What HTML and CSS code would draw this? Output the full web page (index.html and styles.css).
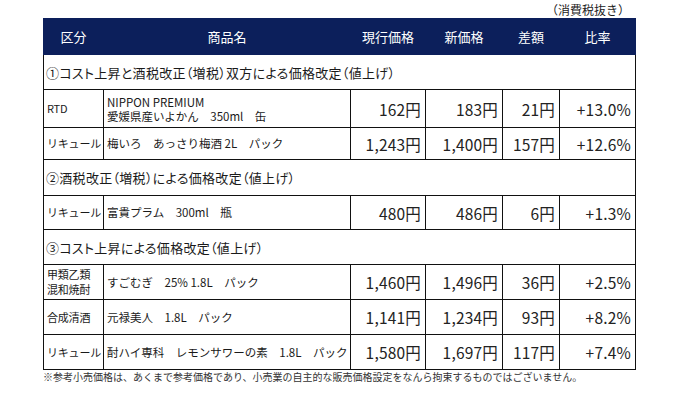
FILE: index.html
```html
<!DOCTYPE html>
<html lang="ja">
<head>
<meta charset="utf-8">
<link rel="stylesheet" href="styles.css">
</head>
<body>
<div class="wrap">
  <div class="note">（消費税抜き）</div>
  <table class="price">
    <colgroup>
      <col class="c1"><col class="c2"><col class="c3"><col class="c4"><col class="c5"><col class="c6">
    </colgroup>
    <thead>
      <tr class="head">
        <th>区分</th><th>商品名</th><th>現行価格</th><th>新価格</th><th>差額</th><th>比率</th>
      </tr>
    </thead>
    <tbody>
      <tr class="sect"><td colspan="6">①コスト上昇と酒税改正（増税）双方による価格改定（値上げ）</td></tr>
      <tr class="r-rtd">
        <td class="cat">RTD</td>
        <td class="name"><span class="ln">NIPPON PREMIUM</span><span class="ln">愛媛県産いよかん　350ml　缶</span></td>
        <td class="num">162円</td><td class="num">183円</td><td class="num">21円</td><td class="num">+13.0%</td>
      </tr>
      <tr class="r-a">
        <td class="cat">リキュール</td>
        <td class="name">梅いろ　あっさり梅酒 2L　パック</td>
        <td class="num">1,243円</td><td class="num">1,400円</td><td class="num">157円</td><td class="num">+12.6%</td>
      </tr>
      <tr class="sect s2"><td colspan="6">②酒税改正（増税）による価格改定（値上げ）</td></tr>
      <tr class="r-b">
        <td class="cat">リキュール</td>
        <td class="name">富貴プラム　300ml　瓶</td>
        <td class="num">480円</td><td class="num">486円</td><td class="num">6円</td><td class="num">+1.3%</td>
      </tr>
      <tr class="sect"><td colspan="6">③コスト上昇による価格改定（値上げ）</td></tr>
      <tr class="r-c">
        <td class="cat"><span class="ln">甲類乙類</span><span class="ln">混和焼酎</span></td>
        <td class="name">すごむぎ　25% 1.8L　パック</td>
        <td class="num">1,460円</td><td class="num">1,496円</td><td class="num">36円</td><td class="num">+2.5%</td>
      </tr>
      <tr class="r-c">
        <td class="cat">合成清酒</td>
        <td class="name">元禄美人　1.8L　パック</td>
        <td class="num">1,141円</td><td class="num">1,234円</td><td class="num">93円</td><td class="num">+8.2%</td>
      </tr>
      <tr class="r-c">
        <td class="cat">リキュール</td>
        <td class="name">酎ハイ専科　レモンサワーの素　1.8L　パック</td>
        <td class="num">1,580円</td><td class="num">1,697円</td><td class="num">117円</td><td class="num">+7.4%</td>
      </tr>
    </tbody>
  </table>
  <div class="foot">※参考小売価格は、あくまで参考価格であり、小売業の自主的な販売価格設定をなんら拘束するものではございません。</div>
</div>
</body>
</html>
```

FILE: styles.css
```css
html, body {
  margin: 0;
  padding: 0;
  background: #ffffff;
}
body {
  font-family: "Noto Sans CJK JP", "Noto Sans", sans-serif;
  color: #1a1a1a;
}
.wrap {
  width: 592px;
  margin-left: 43px;
  padding-top: 2px;
}
.note {
  text-align: right;
  font-size: 12px;
  line-height: 15px;
  height: 16px;
  padding-right: 5px;
  color: #222;
}
.price {
  border-collapse: collapse;
  table-layout: fixed;
  width: 592px;
}
.c1 { width: 60px; }
.c2 { width: 247px; }
.c3 { width: 75px; }
.c4 { width: 77px; }
.c5 { width: 57px; }
.c6 { width: 76px; }
.price td, .price th {
  border: 1.5px solid #111;
  padding: 0;
}
.head th {
  background: #0c1f5b;
  color: #ffffff;
  font-weight: normal;
  font-size: 13px;
  height: 35px;
  border-color: #0c1f5b;
  border-left: 1px solid #2a3a6a;
}
.head th:first-child { border-left-color: #0c1f5b; }
.sect td {
  font-size: 13px;
  height: 34px;
  padding-left: 2px;
  text-align: left;
  font-feature-settings: "palt" 1;
  letter-spacing: 0.3px;
}
.sect.s2 td { height: 35px; }
.cat {
  font-size: 11px;
  padding-left: 3px !important;
  line-height: 15px;
  white-space: nowrap;
  letter-spacing: -0.2px;
}
.name {
  font-size: 11.5px;
  padding-left: 3px !important;
  line-height: 15px;
  white-space: nowrap;
}
.ln {
  display: block;
}
.name .ln {
  line-height: 14px;
}
.num {
  text-align: right;
  font-size: 15.5px;
  padding-right: 4px !important;
  letter-spacing: 0.2px;
  color: #222;
}
.r-rtd td { height: 37px; }
.r-a td { height: 31px; }
.r-b td { height: 33px; }
.r-c td { height: 34px; }
.foot {
  font-size: 10px;
  color: #333;
  margin-top: 1px;
  line-height: 12px;
  white-space: nowrap;
}
```
